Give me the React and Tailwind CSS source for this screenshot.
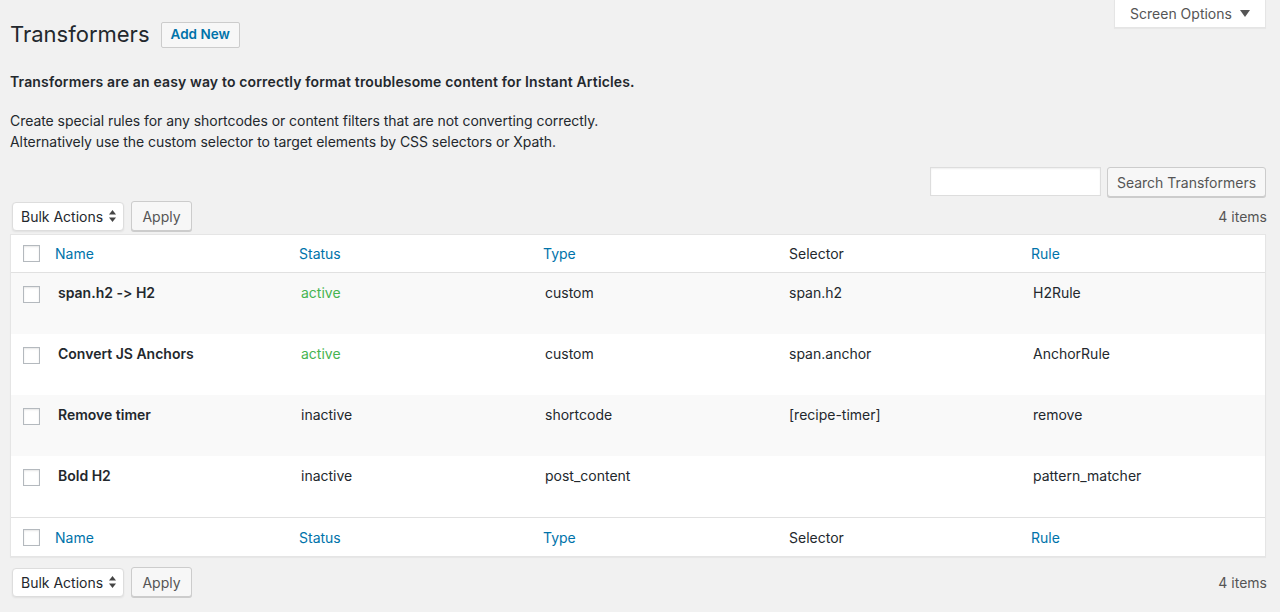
import React from 'react';

const rows = [
  { name: 'span.h2 -> H2', status: 'active', type: 'custom', selector: 'span.h2', rule: 'H2Rule' },
  { name: 'Convert JS Anchors', status: 'active', type: 'custom', selector: 'span.anchor', rule: 'AnchorRule' },
  { name: 'Remove timer', status: 'inactive', type: 'shortcode', selector: '[recipe-timer]', rule: 'remove' },
  { name: 'Bold H2', status: 'inactive', type: 'post_content', selector: '', rule: 'pattern_matcher' },
];

const cols = 'grid grid-cols-[34px_244px_244px_246px_242px_1fr]';

const Checkbox = () => (
  <span className="block w-[17px] h-[17px] bg-white border border-[#b4b9be] shadow-[inset_0_1px_2px_rgba(0,0,0,0.1)]" />
);

const HeaderRow = ({ top }) => (
  <div className={`${cols} ${top ? 'h-[38px] border-b' : 'h-[39px] border-t'} items-center border-[#e1e1e1]`}>
    <div className="pl-[12px]"><Checkbox /></div>
    <div className="pl-[10px] text-[#0073aa]">Name</div>
    <div className="pl-[10px] text-[#0073aa]">Status</div>
    <div className="pl-[10px] text-[#0073aa]">Type</div>
    <div className="pl-[10px] text-[#23282d]">Selector</div>
    <div className="pl-[10px] text-[#0073aa]">Rule</div>
  </div>
);

const BulkActions = () => (
  <div className="flex items-center gap-[7px] pl-[2px]">
    <div className="h-[29px] w-[112px] flex items-center justify-between pl-[8px] pr-[7px] bg-white border border-[#ddd] rounded-[4px] shadow-[0_1px_2px_rgba(0,0,0,0.07)] text-[#23282d]">
      <span>Bulk Actions</span>
      <svg width="7" height="12" viewBox="0 0 7 12">
        <path d="M3.5 0L7 4.5H0z" fill="#444" />
        <path d="M3.5 12L0 7.5H7z" fill="#444" />
      </svg>
    </div>
    <button className="h-[30px] w-[61px] bg-[#f7f7f7] border border-[#ccc] rounded-[3px] shadow-[0_1px_0_#ccc] text-[#555]">Apply</button>
  </div>
);

export default function App() {
  return (
    <div className="min-h-[612px] bg-[#f1f1f1] pl-[10px] pr-[14px] text-[14px] text-[#23282d] [font-variant-ligatures:none] font-['Inter','Liberation_Sans',sans-serif]">
      <div className="flex justify-between items-start">
        <div className="flex items-center pt-[20px]">
          <h1 className="text-[22px] leading-[29px] font-normal text-[#23282d]">Transformers</h1>
          <button className="ml-[11px] h-[26px] px-[9px] bg-[#f7f7f7] border border-[#ccc] rounded-[2px] text-[#0073aa] font-semibold text-[13.5px]">Add New</button>
        </div>
        <button className="h-[28px] w-[152px] flex items-center justify-center gap-[8px] bg-white border border-t-0 border-[#e5e5e5] shadow-[0_1px_1px_rgba(0,0,0,0.04)] text-[#555] text-[14px]">
          Screen Options
          <svg width="10" height="7" viewBox="0 0 10 7"><path d="M0 0H10L5 7z" fill="#555" /></svg>
        </button>
      </div>

      <p className="mt-[23px] leading-[20px] font-semibold tracking-[0.15px]">Transformers are an easy way to correctly format troublesome content for Instant Articles.</p>
      <p className="mt-[18px] leading-[21px] tracking-[-0.05px]">
        Create special rules for any shortcodes or content filters that are not converting correctly.<br />
        Alternatively use the custom selector to target elements by CSS selectors or Xpath.
      </p>

      <div className="mt-[15px] flex justify-end gap-[6px]">
        <input className="h-[29px] w-[171px] bg-white border border-[#ddd] shadow-[inset_0_1px_2px_rgba(0,0,0,0.07)] outline-none" />
        <button className="h-[30px] w-[159px] bg-[#f7f7f7] border border-[#ccc] rounded-[3px] shadow-[0_1px_0_#ccc] text-[#555]">Search Transformers</button>
      </div>

      <div className="mt-[4px] flex items-center justify-between">
        <BulkActions />
        <span className="text-[#555] -mr-[1px]">4 items</span>
      </div>

      <div className="mt-[3px] bg-white border border-[#e5e5e5] shadow-[0_1px_1px_rgba(0,0,0,0.04)]">
        <HeaderRow top />
        {rows.map((r, i) => (
          <div key={r.name} className={`${cols} h-[61px] items-start pt-[10px] ${i % 2 === 0 ? 'bg-[#f9f9f9]' : 'bg-white'}`}>
            <div className="pl-[12px] pt-[3px]"><Checkbox /></div>
            <div className="pl-[13px] leading-[20px] font-semibold">{r.name}</div>
            <div className={`pl-[12px] leading-[20px] ${r.status === 'active' ? 'text-[#46b450]' : ''}`}>{r.status}</div>
            <div className="pl-[12px] leading-[20px]">{r.type}</div>
            <div className="pl-[10px] leading-[20px]">{r.selector}</div>
            <div className="pl-[12px] leading-[20px]">{r.rule}</div>
          </div>
        ))}
        <HeaderRow />
      </div>

      <div className="mt-[10px] flex items-center justify-between pb-[15px]">
        <BulkActions />
        <span className="text-[#555] -mr-[1px]">4 items</span>
      </div>
    </div>
  );
}
